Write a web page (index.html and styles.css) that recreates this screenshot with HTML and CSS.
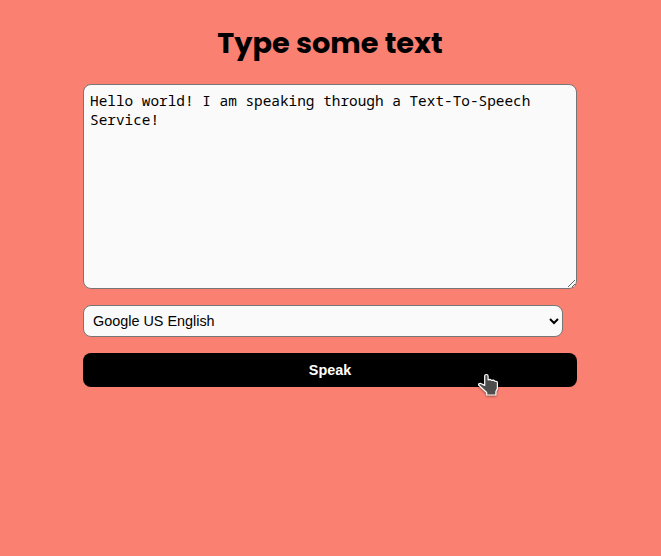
FILE: index.html
```
<!DOCTYPE html>
<html lang="en">
<head>
<meta charset="utf-8">
<title>Text to speech</title>
<link rel="stylesheet" href="styles.css">
</head>
<body>
<main class="speech">
  <h1 class="title">Type some text</h1>
  <textarea class="field message" spellcheck="false">Hello world! I am speaking through a Text-To-Speech Service!</textarea>
  <select class="field voice"><option>Google US English</option></select>
  <div class="action">
    <button class="speak" type="button">Speak</button>
    <svg class="pointer" width="23" height="26" viewBox="0 0 23 26" aria-hidden="true">
      <path d="M7.7 3.2Q7.7 1.5 9.4 1.5T11.1 3.2V6.8L13 6.3L14.7 7.4L16.7 7.1L18 8.3Q20.4 8 20.4 10V15.5L18.9 18.5V22H9.7V19.5L1.6 12Q1.4 10.3 3.2 10.3L7.7 12.4Z"/>
    </svg>
  </div>
</main>
</body>
</html>
```
FILE: styles.css
```
* {
  box-sizing: border-box;
}

html {
  background: salmon;
}

body {
  margin: 0;
  min-height: 100vh;
}

.speech {
  display: flex;
  flex-direction: column;
  align-items: flex-start;
  gap: 16px;
  width: 494px;
  min-height: 100vh;
  margin: 0 auto 0 83px;
  padding-top: 20px;
}

.title {
  align-self: center;
  margin: 0 0 2px;
  font: 700 28.8px/46px Poppins, Inter, sans-serif;
  white-space: nowrap;
}

.field {
  margin: 0;
  border: 1px solid #767676;
  border-radius: 8px;
  background: #fafafa;
  color: #000;
}

.message {
  width: 494px;
  height: 205px;
  padding: 6px;
  font: 14.4px/19px "Noto Sans Mono", monospace;
}

.voice {
  width: 480px;
  height: 32px;
  padding: 0 0 0 5px;
  font: 14.4px "Liberation Sans", Arial, sans-serif;
}

.action {
  position: relative;
}

.speak {
  display: block;
  width: 494px;
  height: 34px;
  border: 0;
  border-radius: 8px;
  background: #000;
  color: #fff;
  font: 700 14.4px "Liberation Sans", Arial, sans-serif;
}

.pointer {
  position: absolute;
  left: 394px;
  top: 20px;
  fill: #4d4d4d;
  stroke: #fff;
  stroke-width: 1.2;
  stroke-linejoin: round;
  filter: drop-shadow(0 1px 1px #0006);
}
```
